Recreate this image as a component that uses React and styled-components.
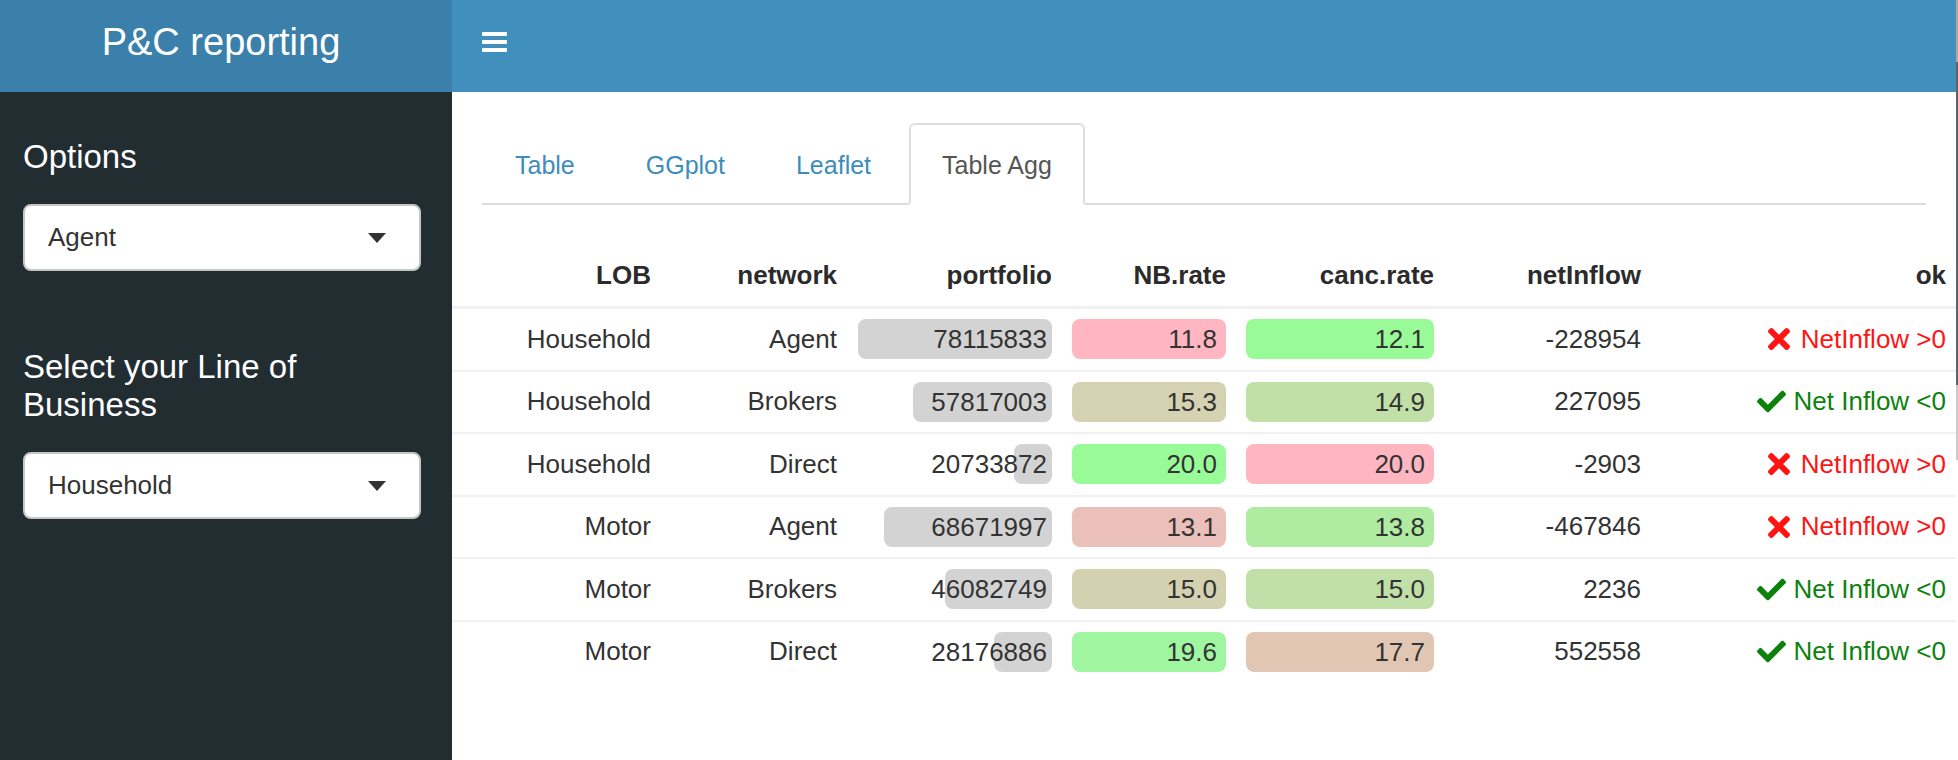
import React from "react";
import styled, { createGlobalStyle, css } from "styled-components";
import { FaCheck, FaTimes } from "react-icons/fa";

const GlobalStyle = createGlobalStyle`
  html, body {
    margin: 0;
    padding: 0;
  }
  body {
    font-family: "Liberation Sans", Arial, sans-serif;
    color: #333;
    background: #fff;
    overflow: hidden;
  }
  * {
    box-sizing: border-box;
  }
`;

// Page frame
const Page = styled.div`
  display: flex;
  width: 1958px;
  height: 760px;
`;

const Layout = styled.div`
  flex: 1;
  min-width: 0;
  display: flex;
  flex-direction: column;
`;

const ScrollEdge = styled.div`
  width: 2px;
  flex-shrink: 0;
  background: linear-gradient(
    to bottom,
    #a8a8a8 0,
    #a8a8a8 62px,
    #5f6368 62px,
    #5f6368 385px,
    #cacaca 385px,
    #cacaca 460px,
    #fff 460px
  );
`;

// Header
const Header = styled.header`
  display: flex;
  height: 92px;
  flex-shrink: 0;
`;

const Logo = styled.div`
  width: 452px;
  flex-shrink: 0;
  background: #3b80aa;
  color: #fff;
  font-size: 38px;
  line-height: 84px;
  text-align: center;
  padding-right: 10px;
`;

const Navbar = styled.div`
  flex: 1;
  background: #418fbc;
  padding: 32px 30px 0;
`;

const Burger = () => (
  <svg width="25" height="20" viewBox="0 0 25 20" fill="#fff">
    <rect x="0" y="0" width="25" height="4" rx="1" />
    <rect x="0" y="8" width="25" height="4" rx="1" />
    <rect x="0" y="16" width="25" height="4" rx="1" />
  </svg>
);

// Sidebar
const Body = styled.div`
  flex: 1;
  display: flex;
  min-height: 0;
`;

const Sidebar = styled.aside`
  width: 452px;
  flex-shrink: 0;
  background: #222d32;
  padding: 46px 31px 0 23px;
`;

const FormGroup = styled.div`
  & + & {
    margin-top: 77px;
  }
`;

const Label = styled.div`
  color: #fff;
  font-size: 33px;
  line-height: 38px;
  margin-bottom: 28px;
`;

const SelectBox = styled.div`
  height: 67px;
  background: #fff;
  border: 2px solid #c6c6c6;
  border-radius: 8px;
  display: flex;
  align-items: center;
  justify-content: space-between;
  padding: 0 33px 0 23px;
  font-size: 26px;
  color: #333;
`;

const Caret = styled.span`
  width: 0;
  height: 0;
  border-left: 9.5px solid transparent;
  border-right: 9.5px solid transparent;
  border-top: 10px solid #333;
`;

// Main area
const Main = styled.main`
  flex: 1;
  min-width: 0;
  display: flex;
  flex-direction: column;
  background: #fff;
`;

const TabNav = styled.nav`
  display: flex;
  margin: 31px 30px 0;
  border-bottom: 2px solid #dedede;
`;

const Tab = styled.div`
  padding: 25px 31px 23px;
  line-height: 30px;
  font-size: 25px;
  margin-right: 5px;
  margin-bottom: -2px;
  border: 2px solid transparent;
  border-radius: 6px 6px 0 0;
  color: #3c8dbc;
  ${(p) =>
    p.$active &&
    css`
      color: #555;
      background: #fff;
      border-color: #dedede #dedede transparent;
    `}
`;

const Table = styled.table`
  width: 100%;
  table-layout: fixed;
  border-collapse: separate;
  border-spacing: 0;
  margin-top: 44px;
  font-size: 26px;
  color: #333;
`;

const Col = styled.col`
  width: ${(p) => (p.$w ? `${p.$w}px` : "auto")};
`;

const HeadCell = styled.th`
  box-sizing: content-box;
  padding: 8px 10px 12px;
  line-height: 37px;
  text-align: right;
  font-weight: bold;
  color: #2b2b2b;
  border-bottom: 1px solid #efefef;
`;

const Cell = styled.td`
  box-sizing: content-box;
  height: 60.5px;
  padding: 0 10px;
  line-height: 37px;
  text-align: right;
  vertical-align: middle;
  white-space: nowrap;
  border-top: 2px solid #f1f1f1;
`;

const BarCell = styled.div`
  position: relative;
  height: 40px;
  line-height: 40px;
  padding-right: 5px;
`;

const Bar = styled.div`
  position: absolute;
  right: 0;
  top: 0;
  bottom: 0;
  background: #d3d3d3;
  border-radius: 8px;
`;

const BarValue = styled.span`
  position: relative;
`;

const RateBox = styled.div`
  height: 40px;
  line-height: 40px;
  border-radius: 8px;
  background: ${(p) => p.$bg};
  padding-right: 9px;
`;

const Status = styled.div`
  display: flex;
  justify-content: flex-end;
  align-items: center;
  gap: ${(p) => (p.$ok ? 8 : 11)}px;
  color: ${(p) => (p.$ok ? "#0c820c" : "#ff1414")};
`;

const CrossIcon = styled(FaTimes)`
  width: 22px;
  height: 32px;
`;

const CheckIcon = styled(FaCheck)`
  width: 29px;
  height: 29px;
`;

const columns = [
  { key: "LOB", w: 209 },
  { key: "network", w: 186 },
  { key: "portfolio", w: 215 },
  { key: "NB.rate", w: 174 },
  { key: "canc.rate", w: 208 },
  { key: "netInflow", w: 207 },
  { key: "ok" },
];

const rows = [
  { lob: "Household", net: "Agent", pf: 78115833, nb: "11.8", nbBg: "#ffb6c1", canc: "12.1", cancBg: "#98fb98", inflow: "-228954", ok: false },
  { lob: "Household", net: "Brokers", pf: 57817003, nb: "15.3", nbBg: "#d4d2b1", canc: "14.9", cancBg: "#c0e0a8", inflow: "227095", ok: true },
  { lob: "Household", net: "Direct", pf: 20733872, nb: "20.0", nbBg: "#98fb98", canc: "20.0", cancBg: "#ffb6c1", inflow: "-2903", ok: false },
  { lob: "Motor", net: "Agent", pf: 68671997, nb: "13.1", nbBg: "#ecc0ba", canc: "13.8", cancBg: "#b0eba2", inflow: "-467846", ok: false },
  { lob: "Motor", net: "Brokers", pf: 46082749, nb: "15.0", nbBg: "#d4d1b0", canc: "15.0", cancBg: "#c0e0a8", inflow: "2236", ok: true },
  { lob: "Motor", net: "Direct", pf: 28176886, nb: "19.6", nbBg: "#a0f5a0", canc: "17.7", cancBg: "#e1c7b3", inflow: "552558", ok: true },
];

const pfMin = Math.min(...rows.map((r) => r.pf));
const pfMax = Math.max(...rows.map((r) => r.pf));
const barWidth = (v) => 38 + ((v - pfMin) / (pfMax - pfMin)) * 155.6;

const tabs = ["Table", "GGplot", "Leaflet", "Table Agg"];

function App() {
  return (
    <Page>
      <GlobalStyle />
      <Layout>
        <Header>
          <Logo>P&amp;C reporting</Logo>
          <Navbar>
            <Burger />
          </Navbar>
        </Header>
        <Body>
          <Sidebar>
            <FormGroup>
              <Label>Options</Label>
              <SelectBox>
                Agent
                <Caret />
              </SelectBox>
            </FormGroup>
            <FormGroup>
              <Label>Select your Line of Business</Label>
              <SelectBox>
                Household
                <Caret />
              </SelectBox>
            </FormGroup>
          </Sidebar>
          <Main>
            <TabNav>
              {tabs.map((t) => (
                <Tab key={t} $active={t === "Table Agg"}>
                  {t}
                </Tab>
              ))}
            </TabNav>
            <Table>
              <colgroup>
                {columns.map((c) => (
                  <Col key={c.key} $w={c.w} />
                ))}
              </colgroup>
              <thead>
                <tr>
                  {columns.map((c) => (
                    <HeadCell key={c.key}>{c.key}</HeadCell>
                  ))}
                </tr>
              </thead>
              <tbody>
                {rows.map((r, i) => (
                  <tr key={i}>
                    <Cell>{r.lob}</Cell>
                    <Cell>{r.net}</Cell>
                    <Cell>
                      <BarCell>
                        <Bar style={{ width: barWidth(r.pf) }} />
                        <BarValue>{r.pf}</BarValue>
                      </BarCell>
                    </Cell>
                    <Cell>
                      <RateBox $bg={r.nbBg}>{r.nb}</RateBox>
                    </Cell>
                    <Cell>
                      <RateBox $bg={r.cancBg}>{r.canc}</RateBox>
                    </Cell>
                    <Cell>{r.inflow}</Cell>
                    <Cell>
                      {r.ok ? (
                        <Status $ok>
                          <CheckIcon />
                          Net Inflow &lt;0
                        </Status>
                      ) : (
                        <Status>
                          <CrossIcon />
                          NetInflow &gt;0
                        </Status>
                      )}
                    </Cell>
                  </tr>
                ))}
              </tbody>
            </Table>
          </Main>
        </Body>
      </Layout>
      <ScrollEdge />
    </Page>
  );
}

export default App;
